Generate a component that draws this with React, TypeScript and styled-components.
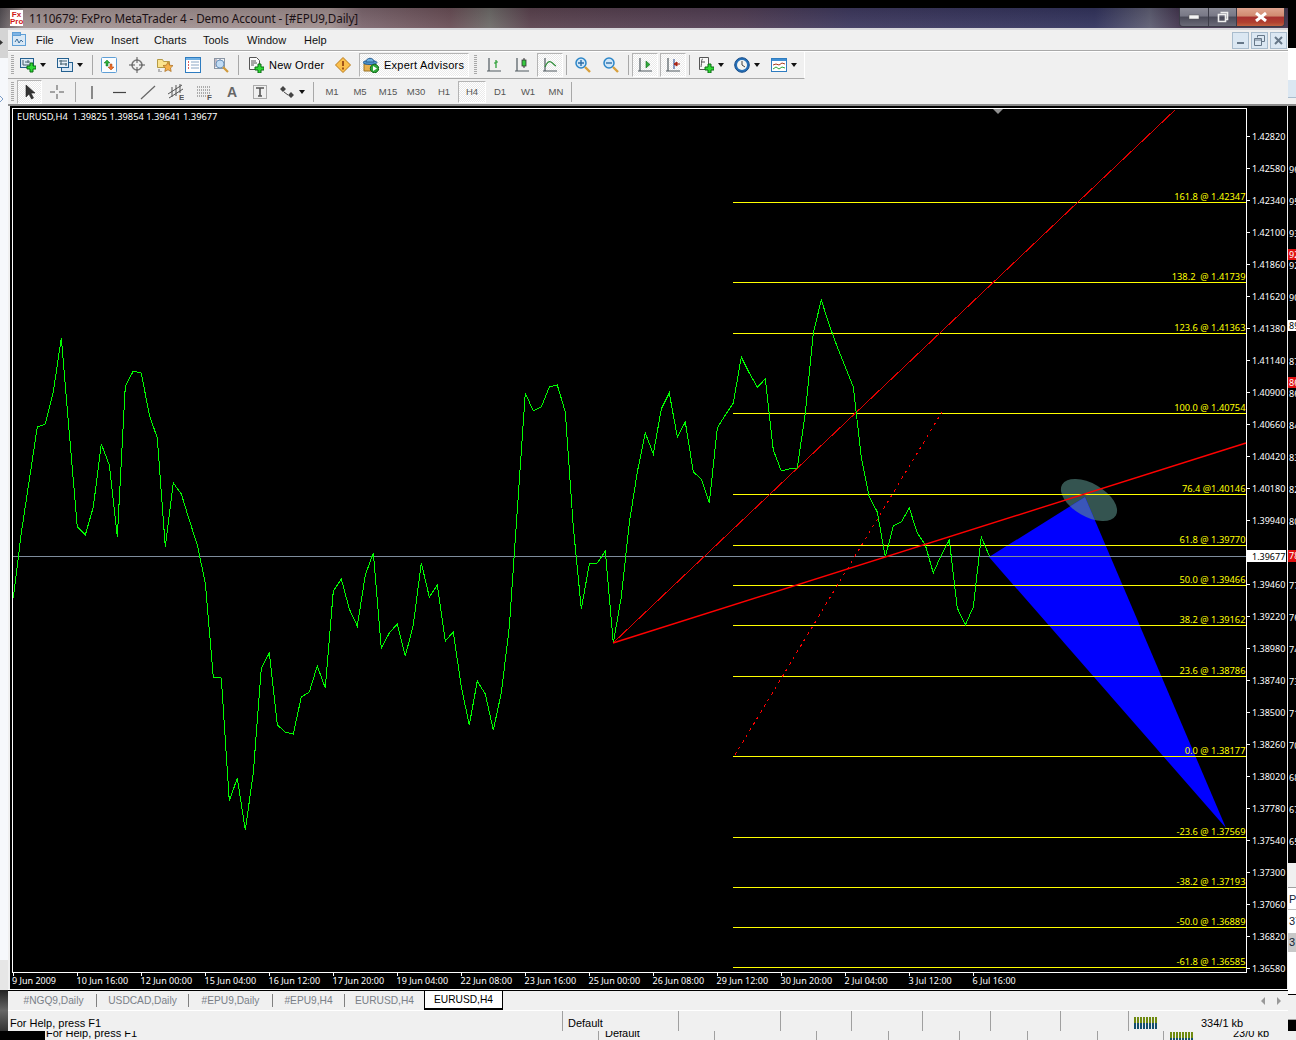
import React from 'react'
import styled, { createGlobalStyle } from 'styled-components'

const GlobalStyle = createGlobalStyle`
    html, body {
        margin: 0;
        padding: 0;
        background: #000;
    }
`

const UI_FONT = '"Liberation Sans", Arial, sans-serif'
const CHART_FONT = '"Noto Sans", "Liberation Sans", sans-serif'

// one y per bar, bars are 8px apart starting at x=13.3
const closes = [598, 533, 480, 427, 424, 392, 338, 433, 527, 535, 507, 444, 465, 537, 386, 371, 373, 415, 438, 547, 483, 494, 520, 545, 583, 677, 678, 801, 778, 830, 773, 668, 653, 725, 732, 734, 697, 692, 666, 688, 591, 579, 609, 626, 575, 553, 648, 633, 624, 656, 625, 563, 597, 585, 641, 632, 687, 725, 681, 694, 730, 693, 627, 510, 393, 411, 407, 387, 385, 412, 527, 609, 564, 563, 551, 643, 597, 523, 472, 433, 454, 409, 393, 437, 422, 472, 479, 503, 428, 415, 403, 357, 373, 387, 379, 450, 471, 469, 468, 413, 333, 300, 325, 347, 367, 387, 457, 497, 512, 557, 526, 522, 508, 533, 545, 573, 555, 540, 608, 625, 607, 537, 556]
const greenPoints = closes.map((y, i) => `${(13.3 + i * 8).toFixed(1)},${y}`).join(' ')

const fibLevels = [
    { y: 202, text: '161.8 @ 1.42347' },
    { y: 282, text: '138.2  @ 1.41739' },
    { y: 333, text: '123.6 @ 1.41363' },
    { y: 413, text: '100.0 @ 1.40754' },
    { y: 494, text: '76.4 @1.40146' },
    { y: 545, text: '61.8 @ 1.39770' },
    { y: 585, text: '50.0 @ 1.39466' },
    { y: 625, text: '38.2 @ 1.39162' },
    { y: 676, text: '23.6 @ 1.38786' },
    { y: 756, text: '0.0 @ 1.38177' },
    { y: 837, text: '-23.6 @ 1.37569' },
    { y: 887, text: '-38.2 @ 1.37193' },
    { y: 927, text: '-50.0 @ 1.36889' },
    { y: 967, text: '-61.8 @ 1.36585' },
]

// the 1.39700 tick sits under the bid price box, so it is left out
const prices = ['1.42820', '1.42580', '1.42340', '1.42100', '1.41860', '1.41620', '1.41380', '1.41140', '1.40900', '1.40660', '1.40420', '1.40180', '1.39940', '', '1.39460', '1.39220', '1.38980', '1.38740', '1.38500', '1.38260', '1.38020', '1.37780', '1.37540', '1.37300', '1.37060', '1.36820', '1.36580']
const dates = ['9 Jun 2009', '10 Jun 16:00', '12 Jun 00:00', '15 Jun 04:00', '16 Jun 12:00', '17 Jun 20:00', '19 Jun 04:00', '22 Jun 08:00', '23 Jun 16:00', '25 Jun 00:00', '26 Jun 08:00', '29 Jun 12:00', '30 Jun 20:00', '2 Jul 04:00', '3 Jul 12:00', '6 Jul 16:00']
const sideLabels = ['96', '95', '93', '92', '90', '', '87', '86', '84', '83', '82', '80', '', '77', '76', '74', '73', '71', '70', '68', '67', '65']

const tabs = [
    { label: '#NGQ9,Daily', w: 86 },
    { label: 'USDCAD,Daily', w: 92 },
    { label: '#EPU9,Daily', w: 84 },
    { label: '#EPU9,H4', w: 72 },
    { label: 'EURUSD,H4', w: 79 },
]

const menus = [
    { label: 'File', w: 34 },
    { label: 'View', w: 41 },
    { label: 'Insert', w: 43 },
    { label: 'Charts', w: 49 },
    { label: 'Tools', w: 44 },
    { label: 'Window', w: 57 },
    { label: 'Help', w: 40 },
]

const statusCells = [116, 102, 71, 71, 68, 70, 68]
const peekCells = [116, 102, 72, 71, 68, 70, 66]
const timeframes = ['M1', 'M5', 'M15', 'M30', 'H1', 'H4', 'D1', 'W1', 'MN']

const Svg = ({ children, w = 16, h = 16 }: { children: React.ReactNode, w?: number, h?: number }) => (
    <svg width={w} height={h} viewBox={`0 0 ${w} ${h}`} style={{ display: 'block', flex: 'none' }}>{children}</svg>
)

const Plus = ({ x = 0, y = 0 }: { x?: number, y?: number }) => (
    <path transform={`translate(${x} ${y})`} d="M3 0h3v3h3v3H6v3H3V6H0V3h3z" fill="#2edb35" stroke="#0b6b12" strokeWidth="1" />
)

const Axes = () => (
    <path d="M3 1v13M1 14h14M3 14l0 0" stroke="#505a60" strokeWidth="1.2" fill="none" />
)

const NewChartIcon = () => <Svg>
    <rect x="0.5" y="1.5" width="13" height="9" fill="#d9e8f5" stroke="#24608f" />
    <path d="M3 3v5h8M5 5h5M8 3v3" stroke="#44606f" fill="none" />
    <Plus x={7} y={6} />
</Svg>

const ProfilesIcon = () => <Svg>
    <rect x="4.5" y="5.5" width="11" height="9" fill="#d9e8f5" stroke="#24608f" />
    <rect x="0.5" y="1.5" width="11" height="9" fill="#e8f1f9" stroke="#24608f" />
    <path d="M2 4h8M3 7h7M4 3v5M9 6v3" stroke="#44606f" fill="none" />
</Svg>

const MarketWatchIcon = () => <Svg>
    <rect x="0.5" y="0.5" width="15" height="15" rx="1" fill="#fbfdff" stroke="#5f9fd6" />
    <path d="M6 3l3 3H7v3H5V6H3z" fill="#2eb03a" stroke="#16701e" strokeWidth=".5" />
    <path d="M10 13l-3-3h2V7h2v3h2z" fill="#f0702a" stroke="#a04010" strokeWidth=".5" />
</Svg>

const TargetIcon = () => <Svg>
    <circle cx="8" cy="8" r="5" fill="none" stroke="#777" strokeWidth="1.5" />
    <path d="M8 0v6M8 10v6M0 8h6M10 8h6" stroke="#555" />
</Svg>

const FolderStarIcon = () => <Svg>
    <path d="M0.5 2.5h5l1 2h6v6h-12z" fill="#fbe38e" stroke="#b59a45" />
    <path d="M11 5l1.6 3.2 3.4.4-2.5 2.4.7 3.5-3.2-1.7-3.2 1.7.7-3.5L6 8.6l3.4-.4z" fill="#f5b04a" stroke="#a86a1c" strokeWidth=".7" />
    <path d="M2 12v3M4 14v1" stroke="#777" />
</Svg>

const NavigatorIcon = () => <Svg>
    <rect x="0.5" y="0.5" width="15" height="15" fill="#fff" stroke="#2e7cc0" />
    <rect x="1" y="1" width="14" height="2" fill="#6fb0e4" />
    <path d="M6 5h8M6 8h8M6 11h8" stroke="#8aa6c4" />
    <path d="M3 5h1M3 8h1M3 11h1" stroke="#d03030" strokeWidth="1.5" />
</Svg>

const TesterIcon = () => <Svg>
    <rect x="1.5" y="1.5" width="10" height="10" fill="#eef2f6" stroke="#8a96a4" />
    <path d="M3 2v8M7 2v5" stroke="#9a7c8c" />
    <circle cx="7" cy="7" r="4" fill="#c2dcf4" stroke="#6c94bc" />
    <path d="M10 10l5 5" stroke="#d09a3c" strokeWidth="2.2" />
</Svg>

const NewOrderIcon = () => <Svg>
    <path d="M1.5 0.5h7l3 3v9h-10z" fill="#fbfbfb" stroke="#555" />
    <path d="M3 4h5M3 6h6M3 8h3" stroke="#555" />
    <Plus x={7} y={7} />
</Svg>

const WarningIcon = () => <Svg>
    <path d="M8 0.5L15.5 8 8 15.5 0.5 8z" fill="#fbbf4c" stroke="#b87a1a" />
    <path d="M8 4v5M8 10.5v2" stroke="#8a3a10" strokeWidth="1.6" />
</Svg>

const AdvisorIcon = () => <Svg>
    <path d="M1 14V7h11v7z" fill="#e8b04e" stroke="#9a7426" />
    <ellipse cx="7" cy="5.5" rx="7" ry="2" fill="#4f97cf" stroke="#2a5e90" />
    <path d="M3 5c0-5 8-5 8 0z" fill="#6fb0e0" stroke="#2a5e90" />
    <circle cx="11.5" cy="11.5" r="4.2" fill="#2fa83a" stroke="#146b1c" />
    <path d="M10 9l4 2.5-4 2.5z" fill="#fff" />
</Svg>

const BarChartIcon = () => <Svg>
    <Axes />
    <path d="M10 3v8M10 6H8M10 5h2" stroke="#1f9a2a" strokeWidth="1.2" fill="none" />
</Svg>

const CandleIcon = () => <Svg>
    <Axes />
    <path d="M10 1v10" stroke="#333" />
    <rect x="8" y="3" width="4" height="6" fill="#35c93f" stroke="#333" strokeWidth=".8" />
</Svg>

const LineChartIcon = () => <Svg>
    <Axes />
    <path d="M3 10c2-5 4-6 6-5s3 3 5 4" stroke="#2a8a34" strokeWidth="1.1" fill="none" />
</Svg>

const ZoomIcon = ({ plus }: { plus?: boolean }) => <Svg>
    <circle cx="6" cy="6" r="5" fill="#cfe6f8" stroke="#2c86c8" strokeWidth="1.5" />
    <path d={plus ? 'M3 6h6M6 3v6' : 'M3 6h6'} stroke="#2c6ea8" strokeWidth="1.4" />
    <path d="M10 10l5 5" stroke="#d8a03c" strokeWidth="2.4" />
</Svg>

const AutoScrollIcon = () => <Svg>
    <Axes />
    <path d="M9 4l4 3.5-4 3.5z" fill="#2fa83a" stroke="#146b1c" strokeWidth=".6" />
</Svg>

const ChartShiftIcon = () => <Svg>
    <Axes />
    <path d="M9 2v10" stroke="#1c3f8a" />
    <path d="M15 7h-3v-2l-3 2 3 2V7" fill="#a82010" stroke="#a82010" />
</Svg>

const TemplateIcon = () => <Svg>
    <path d="M1.5 0.5h9v12h-9z" fill="#f8f8f8" stroke="#555" />
    <path d="M5 2c-2 0-1 3-2 8M3 5h4" stroke="#555" fill="none" />
    <Plus x={7} y={7} />
</Svg>

const ClockIcon = () => <Svg>
    <circle cx="8" cy="8" r="7.3" fill="#2670b8" stroke="#164c88" />
    <circle cx="8" cy="8" r="5" fill="#f4f4f0" />
    <path d="M8 4v4l3 2" stroke="#444" fill="none" />
</Svg>

const IndicatorsIcon = () => <Svg>
    <rect x="0.5" y="1.5" width="15" height="13" fill="#fff" stroke="#2e7cc0" />
    <rect x="1" y="2" width="14" height="2" fill="#3f8fd4" />
    <path d="M2 8l3-1 3 1 3-2 3 1" stroke="#a83c1c" fill="none" />
    <path d="M2 12l3-2 3 2 3-2 3 1" stroke="#2fa83a" fill="none" />
</Svg>

const AppMenuIcon = () => <Svg>
    <rect x="0.5" y="2.5" width="13" height="11" fill="#d9e8f5" stroke="#5f9fd6" />
    <rect x="0.5" y="0.5" width="8" height="3" fill="#7fb4e4" stroke="#5f9fd6" />
    <path d="M3 10l2-3 2 4 2-3 2 2" stroke="#3a6d9a" fill="none" />
</Svg>

const CursorIcon = () => <Svg>
    <path d="M4 1v12l3-3 2.5 5 2-1-2.5-5h4z" fill="#333" stroke="#222" strokeWidth=".6" />
</Svg>

const CrossIcon = () => <Svg>
    <path d="M8 1v5M8 10v5M1 8h5M10 8h5" stroke="#555" />
</Svg>

const VLineIcon = () => <Svg><path d="M8 2v13" stroke="#444" strokeWidth="1.2" /></Svg>
const HLineIcon = () => <Svg><path d="M1 8.5h13" stroke="#444" strokeWidth="1.2" /></Svg>
const TrendIcon = () => <Svg><path d="M1 15L15 2" stroke="#666" strokeWidth="1.2" /></Svg>

const IconLetter = styled.text`
    font-family: ${UI_FONT};
    font-size: 8px;
    font-weight: bold;
    fill: #555;
`

const TextGlyph = styled.span`
    font-size: 14px;
    font-weight: bold;
    color: #666;
`

const ChannelIcon = () => <Svg>
    <path d="M0 10L14 1M1 14L15 5M4 3v10M8 1v11M12 0v9" stroke="#555" fill="none" />
    <IconLetter x="11" y="16">E</IconLetter>
</Svg>

const FiboIcon = () => <Svg>
    <path d="M1 3h14M1 6h14M1 9h14M1 12h9" stroke="#666" strokeDasharray="1 1" />
    <IconLetter x="11" y="16">F</IconLetter>
</Svg>

const TextToolIcon = () => <Svg>
    <path d="M1.5 1.5h13v13h-13z" fill="none" stroke="#666" strokeDasharray="1 1" />
    <path d="M4 4h8M8 4v8M6 12h4" stroke="#555" strokeWidth="1.6" />
</Svg>

const ArrowsIcon = () => <Svg>
    <path d="M1 5l3-3 3 3-3 3zM9 11l3-3 3 3-3 3z" fill="#444" />
    <path d="M5 8l4 3" stroke="#444" />
</Svg>

const Screen = styled.div`
    width: 1296px;
    height: 1040px;
    background: #000;
    display: flex;
    flex-direction: column;
    overflow: hidden;
    padding-top: 8px;
    box-sizing: border-box;
    font-family: ${UI_FONT};
    font-size: 11px;
    color: #000;
`

const TitleBar = styled.div`
    width: 1288px;
    height: 20px;
    flex: none;
    display: flex;
    align-items: center;
    box-sizing: border-box;
    padding-left: 10px;
    background:
        linear-gradient(to bottom, rgba(0, 0, 0, .12), rgba(255, 255, 255, .05)),
        linear-gradient(to right, #555055 0, #a39494 24px, #a08f8f 330px, #7e6870 362px, #6b5058 450px, #6f6c6a 490px, #5c4450 530px, #523f55 740px, #3f3a60 850px, #34355f 1095px, #5f5f74 1150px, #443650 1180px, #443650 1288px);
`

const AppLogo = styled.div`
    width: 13px;
    height: 16px;
    background: #fff;
    color: #d01818;
    font: bold 8px/7px ${UI_FONT};
    text-align: center;
    flex: none;
    margin-right: 6px;
    padding-top: 1px;
    box-sizing: border-box;
`

const TitleText = styled.span`
    font-family: "Noto Sans", sans-serif;
    font-size: 11.7px;
    letter-spacing: -0.1px;
    color: #1a1014;
    white-space: nowrap;
`

const CaptionButtons = styled.div`
    margin-left: auto;
    margin-right: 3px;
    display: flex;
    height: 18px;
    align-self: flex-start;
    border: 1px solid #3c3c48;
    border-top: none;
    border-radius: 0 0 4px 4px;
    overflow: hidden;
`

const CaptionButton = styled.div<{ $w: number, $close?: boolean }>`
    width: ${p => p.$w}px;
    display: flex;
    align-items: center;
    justify-content: center;
    border-left: 1px solid #3c3c48;
    &:first-child { border-left: none; }
    background: ${p => p.$close
        ? 'linear-gradient(to bottom, #e0a490 0, #d08a70 45%, #a83030 50%, #b04030 80%, #c06040 100%)'
        : 'linear-gradient(to bottom, #8a8a96 0, #787886 45%, #4a4a58 50%, #6a6a78 100%)'};
`

const Middle = styled.div`
    flex: none;
    height: 1003px;
    display: flex;
`

const LeftStrip = styled.div`
    width: 8px;
    flex: none;
    display: flex;
    flex-direction: column;
`

const LeftPart = styled.div<{ $h: number, $bg: string, $pad?: number }>`
    height: ${p => p.$h}px;
    flex: none;
    box-sizing: border-box;
    padding-top: ${p => p.$pad ?? 0}px;
    background: ${p => p.$bg};
`

const Workspace = styled.div`
    width: 1280px;
    flex: none;
    display: flex;
    flex-direction: column;
    background: #f0f0f0;
`

const MenuBar = styled.div`
    height: 22px;
    flex: none;
    display: flex;
    align-items: center;
    box-sizing: border-box;
    border-top: 2px solid #d8d8dc;
    padding-left: 4px;
`

const MenuIconSlot = styled.div`
    width: 24px;
    flex: none;
`

const MenuItem = styled.span<{ $w: number }>`
    width: ${p => p.$w}px;
    flex: none;
    font-size: 11px;
    color: #111;
`

const MdiButtons = styled.div`
    margin-left: auto;
    margin-right: 1px;
    display: flex;
    gap: 2px;
`

const MdiButton = styled.div`
    width: 17px;
    height: 17px;
    display: flex;
    align-items: center;
    justify-content: center;
    box-sizing: border-box;
    border: 1px solid #a9bccd;
    background: #dbe7f2;
`

const ToolRowTop = styled.div`
    height: 28px;
    flex: none;
    display: flex;
    align-items: center;
    border-top: 1px solid #a9a9a9;
    box-shadow: inset 0 1px 0 #fff;
`

const ToolRowTopInner = styled.div`
    width: 797px;
    height: 28px;
    display: flex;
    align-items: center;
    box-sizing: border-box;
    padding-left: 3px;
    border-bottom: 1px solid #a9a9a9;
    border-right: 1px solid #fff;
`

const ToolRowBottom = styled.div`
    height: 27px;
    flex: none;
    display: flex;
    align-items: center;
    box-sizing: border-box;
    padding-left: 3px;
    border-bottom: 2px solid #8c8c8c;
`

const Gripper = styled.div<{ $ml?: number, $mr: number }>`
    width: 3px;
    height: 20px;
    flex: none;
    margin-left: ${p => p.$ml ?? 0}px;
    margin-right: ${p => p.$mr}px;
    background: repeating-linear-gradient(to bottom, #a8a8a8 0 1px, #f0f0f0 1px 2px);
`

const Separator = styled.div<{ $ml?: number, $mr?: number }>`
    width: 1px;
    height: 20px;
    flex: none;
    margin-left: ${p => p.$ml ?? 3}px;
    margin-right: ${p => p.$mr ?? 2}px;
    background: #a8a8a8;
`

const ToolButton = styled.div<{ $w?: number, $ml?: number, $pressed?: boolean }>`
    width: ${p => p.$w ?? 28}px;
    height: 24px;
    flex: none;
    display: flex;
    align-items: center;
    justify-content: center;
    box-sizing: border-box;
    margin-left: ${p => p.$ml ?? 0}px;
    ${p => p.$pressed && `
        background: repeating-conic-gradient(#fff 0 25%, #eaeaea 0 50%) 0 0 / 2px 2px;
        border: 1px solid;
        border-color: #b4b4b4 #fff #fff #b4b4b4;
    `}
`

const DropButton = styled.div<{ $w: number, $ml?: number }>`
    width: ${p => p.$w}px;
    height: 24px;
    flex: none;
    margin-left: ${p => p.$ml ?? 0}px;
    padding-left: 1px;
    box-sizing: border-box;
    display: flex;
    align-items: center;
`

const Caret = styled.span`
    width: 0;
    height: 0;
    flex: none;
    margin-left: 4px;
    border-left: 3px solid transparent;
    border-right: 3px solid transparent;
    border-top: 4px solid #111;
`

const LabelButton = styled.div<{ $w: number, $ml?: number, $pressed?: boolean }>`
    width: ${p => p.$w}px;
    height: 24px;
    flex: none;
    display: flex;
    align-items: center;
    gap: 5px;
    padding-left: ${p => p.$pressed ? 3 : 7}px;
    box-sizing: border-box;
    margin-left: ${p => p.$ml ?? 0}px;
    font-size: 11px;
    letter-spacing: 0.25px;
    white-space: nowrap;
    ${p => p.$pressed && `
        background: repeating-conic-gradient(#fff 0 25%, #eaeaea 0 50%) 0 0 / 2px 2px;
        border: 1px solid;
        border-color: #b4b4b4 #fff #fff #b4b4b4;
    `}
`

const TimeframeButton = styled(ToolButton)`
    font-size: 9.5px;
    color: #555;
    width: 28px;
    height: 22px;
`

const ChartHolder = styled.div`
    height: 884px;
    flex: none;
    padding: 0 1px 0 2px;
`

const ChartText = styled.text`
    font-family: ${CHART_FONT};
    font-size: 9px;
    fill: #fff;
`

const HeaderText = styled(ChartText)`
    font-size: 9.3px;
`

const FibText = styled(ChartText)`
    font-size: 9.3px;
    fill: #ffff00;
`

const PriceBoxText = styled(ChartText)`
    fill: #000;
`

const TabBar = styled.div`
    height: 21px;
    flex: none;
    display: flex;
    align-items: center;
    box-sizing: border-box;
    padding-left: 3px;
    border-top: 1px solid #000;
    border-bottom: 1px solid #fff;
    box-shadow: 0 -1px 0 #fff;
`

const Tab = styled.div<{ $w: number, $active?: boolean }>`
    width: ${p => p.$w}px;
    flex: none;
    box-sizing: border-box;
    text-align: center;
    font-size: 10.2px;
    white-space: nowrap;
    color: ${p => p.$active ? '#000' : '#7a8088'};
    ${p => p.$active ? `
        height: 19px;
        align-self: flex-start;
        line-height: 17px;
        background: #fff;
        border: 1px solid #000;
        border-top: none;
        border-bottom-width: 2px;
    ` : `
        height: 13px;
        line-height: 13px;
        border-right: 1px solid #808080;
        &:nth-child(5) { border-right: none; }
    `}
`

const TabArrows = styled.div`
    margin-left: auto;
    margin-right: 6px;
    display: flex;
    gap: 10px;
`

const StatusBar = styled.div`
    height: 20px;
    flex: none;
    display: flex;
    align-items: stretch;
    box-sizing: border-box;
    padding-left: 2px;
    font-size: 11px;
`

const StatusCell = styled.div<{ $w?: number }>`
    width: ${p => p.$w ? `${p.$w}px` : 'auto'};
    flex: ${p => p.$w ? 'none' : 1};
    display: flex;
    align-items: center;
    padding: 3px 0 0 5px;
    box-sizing: border-box;
    border-left: 1px solid #a0a0a0;
    white-space: nowrap;
    overflow: hidden;
    &:first-child { border-left: none; padding-left: 0; }
`

const TrafficBars = styled.div`
    display: flex;
    align-items: flex-end;
    gap: 1px;
    margin-right: 44px;
    height: 13px;
    flex: none;
`

const TrafficBar = styled.div`
    width: 2px;
    height: 12px;
    flex: none;
    background: linear-gradient(to bottom, #6f8a10 0 50%, #14506e 50% 100%);
`

const RightStrip = styled.div`
    width: 8px;
    flex: none;
    display: flex;
    flex-direction: column;
    overflow: hidden;
`

const SidePart = styled.div<{ $h: number, $bg: string, $line?: string }>`
    height: ${p => p.$h}px;
    flex: none;
    box-sizing: border-box;
    background: ${p => p.$bg};
    border-bottom: ${p => p.$line ? `1px solid ${p.$line}` : 'none'};
    font-size: 11px;
    line-height: ${p => p.$h}px;
    color: #123;
    white-space: nowrap;
    overflow: hidden;
    padding-left: 1px;
`

const PeekBar = styled.div`
    flex: none;
    height: 9px;
    margin-left: 45px;
    background: #f0f0f0;
    display: flex;
    overflow: hidden;
    font-size: 11px;
    line-height: 4px;
    white-space: nowrap;
`

const PeekCell = styled.div<{ $w?: number }>`
    width: ${p => p.$w ? `${p.$w}px` : 'auto'};
    flex: ${p => p.$w ? 'none' : 1};
    box-sizing: border-box;
    border-left: 1px solid #a0a0a0;
    padding-left: 6px;
    display: flex;
    &:first-child { border-left: none; padding-left: 1px; }
`

function TrafficMeter({ count, mr }: { count: number, mr?: number }) {
    return (
        <TrafficBars style={mr !== undefined ? { marginRight: mr } : undefined}>
            {Array.from({ length: count }).map((_, i) => <TrafficBar key={i} />)}
        </TrafficBars>
    )
}

function PriceChart() {
    return (
        <svg width="1277" height="884" viewBox="10 106 1277 884" style={{ display: 'block', background: '#000' }}>
            <defs>
                <clipPath id="triangleClip">
                    <polygon points="989,557 1085,497 1226,828" />
                </clipPath>
            </defs>

            <ellipse cx="1089" cy="500" rx="31" ry="16.5" transform="rotate(30 1089 500)" fill="#345450" />
            <polygon points="989,557 1085,497 1226,828" fill="#0000ff" />
            <g clipPath="url(#triangleClip)">
                <ellipse cx="1089" cy="500" rx="31" ry="16.5" transform="rotate(30 1089 500)" fill="#3a56b8" />
            </g>

            <g shapeRendering="crispEdges">
                <line x1="13" y1="556.5" x2="1246" y2="556.5" stroke="#7e8c9c" />
                {fibLevels.map(l => <line key={l.y} x1="733" y1={l.y + .5} x2="1246" y2={l.y + .5} stroke="#ffff00" />)}
                <line x1="613" y1="643" x2="1175" y2="110" stroke="#e00000" />
                <line x1="735" y1="755" x2="942" y2="412" stroke="#ff0000" strokeDasharray="3 4" />
                <polyline points={greenPoints} fill="none" stroke="#00ff00" />
                <path d="M12.5 108v864.5M12 972.5h1235M1246.5 108v865M12 108.5h1235" stroke="#fff" fill="none" />
                {prices.map((_, i) => <line key={i} x1="1247" y1={136.5 + i * 32} x2="1250" y2={136.5 + i * 32} stroke="#fff" />)}
                {dates.map((_, i) => <line key={i} x1={13.5 + i * 64} y1="973" x2={13.5 + i * 64} y2="976" stroke="#fff" />)}
            </g>
            <line x1="613" y1="643" x2="1246" y2="443" stroke="#ff0000" strokeWidth="1.4" />

            <polygon points="993,109 1003,109 998,114" fill="#909090" />

            <HeaderText x="17" y="120" xmlSpace="preserve">EURUSD,H4  1.39825 1.39854 1.39641 1.39677</HeaderText>
            {fibLevels.map(l => <FibText key={l.y} x="1245.5" y={l.y - 2} textAnchor="end" xmlSpace="preserve">{l.text}</FibText>)}
            {prices.map((p, i) => p && <ChartText key={p} x="1252" y={139.5 + i * 32}>{p}</ChartText>)}
            {dates.map((d, i) => <ChartText key={d} x={i === 0 ? 12 : 12.5 + i * 64} y="983.5">{d}</ChartText>)}

            <rect x="1247" y="550" width="39" height="12" fill="#fff" />
            <PriceBoxText x="1252" y="559.5">1.39677</PriceBoxText>
        </svg>
    )
}

// the chart window behind the main one, only its scale shows at the right edge
function SideChart() {
    return (
        <svg width="8" height="757" viewBox="1288 106 8 757" style={{ display: 'block', background: '#000', flex: 'none' }}>
            {sideLabels.map((t, i) => t && <ChartText key={t} x="1289" y={172.5 + i * 32}>{t}</ChartText>)}
            <rect x="1288" y="249" width="8" height="11" fill="#e01010" />
            <ChartText x="1289" y="258">92</ChartText>
            <rect x="1288" y="320" width="8" height="11" fill="#fff" />
            <PriceBoxText x="1289" y="329">89</PriceBoxText>
            <rect x="1288" y="377" width="8" height="11" fill="#e01010" />
            <ChartText x="1289" y="386">86</ChartText>
            <rect x="1288" y="550" width="8" height="12" fill="#e01010" />
            <ChartText x="1289" y="559">78</ChartText>
        </svg>
    )
}

export default function App() {
    return (
        <Screen>
            <GlobalStyle />
            <TitleBar>
                <AppLogo>Fx<br />Pro</AppLogo>
                <TitleText>1110679: FxPro MetaTrader 4 - Demo Account - [#EPU9,Daily]</TitleText>
                <CaptionButtons>
                    <CaptionButton $w={28}>
                        <Svg w={12} h={6}><rect x="1" y="1" width="10" height="4" fill="#f4f4f4" stroke="#555" strokeWidth=".5" /></Svg>
                    </CaptionButton>
                    <CaptionButton $w={27}>
                        <Svg w={12} h={12}><path d="M3.5 1.5h7v7h-2M1.5 3.5h7v7h-7z" fill="none" stroke="#eee" strokeWidth="1.6" /></Svg>
                    </CaptionButton>
                    <CaptionButton $w={47} $close>
                        <Svg w={12} h={10}><path d="M1 1l10 8M11 1L1 9" stroke="#fff" strokeWidth="3" /></Svg>
                    </CaptionButton>
                </CaptionButtons>
            </TitleBar>

            <Middle>
                <LeftStrip>
                    <LeftPart $h={30} $bg="#d4d4d4" $pad={12}>
                        <Svg w={4} h={6}><path d="M0 0v5l3-2.5z" fill="#333" /></Svg>
                    </LeftPart>
                    <LeftPart $h={902} $bg="#f6f8fb" $pad={38}>
                        <Svg w={4} h={6}><path d="M0 0l3 3-3 3" fill="none" stroke="#7a9cc6" /></Svg>
                    </LeftPart>
                    <LeftPart $h={30} $bg="#e6e6e6" />
                    <LeftPart $h={41} $bg="linear-gradient(to bottom, #222, #666 50%, #333)" />
                </LeftStrip>

                <Workspace>
                    <MenuBar>
                        <MenuIconSlot><AppMenuIcon /></MenuIconSlot>
                        {menus.map(m => <MenuItem key={m.label} $w={m.w}>{m.label}</MenuItem>)}
                        <MdiButtons>
                            <MdiButton><Svg w={9} h={9}><path d="M1 7h7" stroke="#667788" strokeWidth="2" /></Svg></MdiButton>
                            <MdiButton><Svg w={11} h={11}><path d="M3.5 2.5v-2h7v6h-3M.5 3.5h7v7h-7zM.5 5h7" fill="none" stroke="#667788" /></Svg></MdiButton>
                            <MdiButton><Svg w={11} h={11}><path d="M2 2l7 7M9 2L2 9" stroke="#667788" strokeWidth="2" /></Svg></MdiButton>
                        </MdiButtons>
                    </MenuBar>

                    <ToolRowTop>
                        <ToolRowTopInner>
                            <Gripper $mr={5} />
                            <DropButton $w={37}><NewChartIcon /><Caret /></DropButton>
                            <DropButton $w={33}><ProfilesIcon /><Caret /></DropButton>
                            <Separator />
                            <ToolButton><MarketWatchIcon /></ToolButton>
                            <ToolButton><TargetIcon /></ToolButton>
                            <ToolButton><FolderStarIcon /></ToolButton>
                            <ToolButton><NavigatorIcon /></ToolButton>
                            <ToolButton><TesterIcon /></ToolButton>
                            <Separator />
                            <LabelButton $w={88}><NewOrderIcon />New Order</LabelButton>
                            <ToolButton><WarningIcon /></ToolButton>
                            <LabelButton $w={110} $ml={2} $pressed><AdvisorIcon />Expert Advisors</LabelButton>
                            <Gripper $ml={5} $mr={3} />
                            <ToolButton><BarChartIcon /></ToolButton>
                            <ToolButton><CandleIcon /></ToolButton>
                            <ToolButton $pressed $w={26} $ml={1}><LineChartIcon /></ToolButton>
                            <Separator />
                            <ToolButton><ZoomIcon plus /></ToolButton>
                            <ToolButton><ZoomIcon /></ToolButton>
                            <Separator />
                            <ToolButton $pressed $w={26} $ml={1}><AutoScrollIcon /></ToolButton>
                            <ToolButton $pressed $w={26} $ml={2}><ChartShiftIcon /></ToolButton>
                            <Separator $ml={3} />
                            <DropButton $w={36} $ml={5}><TemplateIcon /><Caret /></DropButton>
                            <DropButton $w={37}><ClockIcon /><Caret /></DropButton>
                            <DropButton $w={36}><IndicatorsIcon /><Caret /></DropButton>
                        </ToolRowTopInner>
                    </ToolRowTop>

                    <ToolRowBottom>
                        <Gripper $mr={3} />
                        <ToolButton $pressed $w={25}><CursorIcon /></ToolButton>
                        <ToolButton $ml={1}><CrossIcon /></ToolButton>
                        <Separator $ml={4} />
                        <ToolButton><VLineIcon /></ToolButton>
                        <ToolButton><HLineIcon /></ToolButton>
                        <ToolButton><TrendIcon /></ToolButton>
                        <ToolButton><ChannelIcon /></ToolButton>
                        <ToolButton><FiboIcon /></ToolButton>
                        <ToolButton><TextGlyph>A</TextGlyph></ToolButton>
                        <ToolButton><TextToolIcon /></ToolButton>
                        <DropButton $w={32} $ml={4}><ArrowsIcon /><Caret /></DropButton>
                        <Separator $mr={4} />
                        {timeframes.map(t => <TimeframeButton key={t} $pressed={t === 'H4'}>{t}</TimeframeButton>)}
                        <Separator $ml={1} />
                    </ToolRowBottom>

                    <ChartHolder><PriceChart /></ChartHolder>

                    <TabBar>
                        {tabs.map(t => <Tab key={t.label} $w={t.w}>{t.label}</Tab>)}
                        <Tab $w={79} $active>EURUSD,H4</Tab>
                        <TabArrows>
                            <Svg w={6} h={8}><path d="M5 0v8L1 4z" fill="#999" /></Svg>
                            <Svg w={6} h={8}><path d="M1 0v8l4-4z" fill="#999" /></Svg>
                        </TabArrows>
                    </TabBar>

                    <StatusBar>
                        <StatusCell $w={552}>For Help, press F1</StatusCell>
                        {statusCells.map((w, i) => <StatusCell key={i} $w={w}>{i === 0 ? 'Default' : ''}</StatusCell>)}
                        <StatusCell>
                            <TrafficMeter count={8} />
                            334/1 kb
                        </StatusCell>
                    </StatusBar>
                </Workspace>

                <RightStrip>
                    <SidePart $h={20} $bg="#000" />
                    <SidePart $h={32} $bg="#fff" />
                    <SidePart $h={18} $bg="#dbe7f2" $line="#a9bccd" />
                    <SidePart $h={6} $bg="#f0f0f0" />
                    <SidePart $h={2} $bg="#8c8c8c" />
                    <SideChart />
                    <SidePart $h={25} $bg="#f0f0f0" $line="#a0a0a0" />
                    <SidePart $h={22} $bg="#fff" $line="#c0c0c0">Pr</SidePart>
                    <SidePart $h={23} $bg="#fff">37</SidePart>
                    <SidePart $h={19} $bg="#c8c8c8">3</SidePart>
                    <SidePart $h={43} $bg="#fff" $line="#000" />
                    <SidePart $h={25} $bg="#f0f0f0" $line="#a0a0a0" />
                </RightStrip>
            </Middle>

            <PeekBar>
                <PeekCell $w={553}>For Help, press F1</PeekCell>
                {peekCells.map((w, i) => <PeekCell key={i} $w={w}>{i === 0 ? 'Default' : ''}</PeekCell>)}
                <PeekCell>
                    <TrafficMeter count={8} mr={40} />
                    23/0 kb
                </PeekCell>
            </PeekBar>
        </Screen>
    )
}
